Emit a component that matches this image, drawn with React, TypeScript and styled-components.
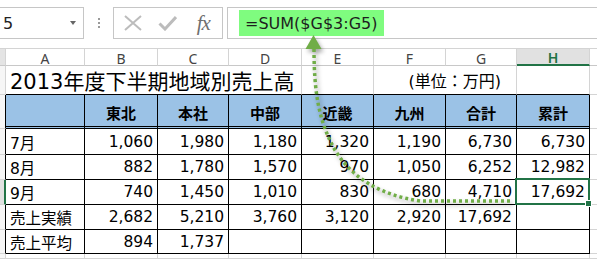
import React from 'react';
import styled, { createGlobalStyle, css } from 'styled-components';

const GRID = '#d4d4d4';
const LINE = '#000000';
const GREEN = '#217346';

const GlobalStyle = createGlobalStyle`
  body {
    margin: 0;
    background: #ffffff;
    font-family: "DejaVu Sans", "Noto Sans CJK JP", sans-serif;
  }
`;

const Page = styled.div`
  position: relative;
  width: 597px;
  height: 259px;
  overflow: hidden;
  background: #ffffff;
`;

const Toolbar = styled.div`
  display: flex;
  align-items: flex-start;
  height: 48px;
  padding-top: 7px;
  box-sizing: border-box;
`;

const NameBox = styled.div`
  box-sizing: border-box;
  display: flex;
  align-items: center;
  width: 85px;
  height: 32px;
  margin-left: -1px;
  padding-left: 3px;
  border: 1px solid #c6c6c6;
  font-size: 16px;
  color: #222;
`;

const DropArrow = styled.span`
  margin-left: auto;
  margin-right: 7px;
  width: 0;
  height: 0;
  border-left: 3px solid transparent;
  border-right: 3px solid transparent;
  border-top: 4px solid #666;
`;

const Grip = styled.div`
  width: 29px;
  height: 32px;
  display: flex;
  flex-direction: column;
  align-items: center;
  justify-content: center;
  gap: 2px;
`;

const GripDot = styled.span`
  width: 2px;
  height: 2px;
  background: #9a9a9a;
`;

const FnBox = styled.div`
  box-sizing: border-box;
  display: flex;
  align-items: center;
  width: 110px;
  height: 32px;
  padding: 0 1px;
  border: 1px solid #c6c6c6;
`;

const FnSlot = styled.div`
  width: 36px;
  display: flex;
  justify-content: center;
  align-items: center;
`;

const Fx = styled.span`
  font-family: "Liberation Serif", serif;
  font-style: italic;
  font-size: 21px;
  color: #6f6f6f;
  letter-spacing: -1px;
`;

const FormulaBox = styled.div`
  box-sizing: border-box;
  flex: 1;
  height: 32px;
  margin-left: 4px;
  padding: 2px 0 2px 11px;
  border: 1px solid #c6c6c6;
  border-right: none;
  display: flex;
  align-items: stretch;
`;

const FormulaMark = styled.span`
  display: flex;
  align-items: center;
  padding: 0 7px 0 6px;
  background: #7ffc7f;
  font-size: 16px;
  color: #1e1e1e;
`;

const Sheet = styled.div`
  display: grid;
  grid-template-columns: 6px 79px 73px 71px 73px 72px 72px 71px 73px 1fr;
  grid-template-rows: 17px 29px 34px 26px 25px 25px 25px 24px 1fr;
  height: 211px;
  box-sizing: border-box;
  border-top: 1px solid ${GRID};
`;

const ColHead = styled.div<{ $active?: boolean }>`
  box-sizing: border-box;
  display: flex;
  justify-content: center;
  align-items: center;
  padding-top: 2px;
  font-family: "Noto Sans", sans-serif;
  font-size: 14px;
  color: #444;
  background: ${p => (p.$active ? '#e1e1e1' : '#ffffff')};
  border-right: 1px solid ${GRID};
  border-bottom: ${p => (p.$active ? `2px solid ${GREEN}` : `1px solid #c8c8c8`)};
  ${p => p.$active && css`color: ${GREEN}; font-weight: 600;`}
`;

const Corner = styled.div`
  background: #e4e4e4;
  border-right: 1px solid ${GRID};
  border-bottom: 1px solid #c8c8c8;
`;

const RowHead = styled.div<{ $r?: string; $active?: boolean }>`
  box-sizing: border-box;
  background: ${p => (p.$active ? '#e1e1e1' : '#f6f6f6')};
  border-bottom: 1px solid ${GRID};
  border-right: ${p => (p.$active ? `2px solid ${GREEN}` : `1px solid ${p.$r || GRID}`)};
`;

type CellProps = {
  $r?: string;
  $b?: string;
  $double?: boolean;
  $align?: 'left' | 'right' | 'center';
  $bg?: string;
  $span?: number;
  $size?: number;
  $bold?: boolean;
  $pr?: number;
  $selected?: boolean;
};

const Cell = styled.div<CellProps>`
  box-sizing: border-box;
  display: flex;
  align-items: center;
  justify-content: ${p =>
    p.$align === 'right' ? 'flex-end' : p.$align === 'center' ? 'center' : 'flex-start'};
  grid-column: span ${p => p.$span || 1};
  padding: ${p => (p.$bold ? '4px' : '0')} ${p => p.$pr ?? 4}px 0 4px;
  min-width: 0;
  white-space: nowrap;
  font-size: ${p => p.$size || 15.5}px;
  font-weight: ${p => (p.$bold ? 700 : 400)};
  color: #000;
  background: ${p => p.$bg || '#ffffff'};
  border-right: 1px solid ${p => p.$r || GRID};
  border-bottom: ${p => (p.$double ? `3px double ${LINE}` : `1px solid ${p.$b || GRID}`)};
  ${p =>
    p.$selected &&
    css`
      position: relative;
      z-index: 2;
      &::after {
        content: '';
        position: absolute;
        top: -2px;
        left: -2px;
        right: -1px;
        bottom: -1px;
        border: 2px solid ${GREEN};
      }
      &::before {
        content: '';
        position: absolute;
        right: -3px;
        bottom: -3px;
        width: 5px;
        height: 5px;
        background: ${GREEN};
        border: 1px solid #ffffff;
        z-index: 1;
      }
    `}
`;

const ArrowLayer = styled.svg`
  position: absolute;
  left: 0;
  top: 0;
  pointer-events: none;
  z-index: 5;
  filter: drop-shadow(2px 3px 2px rgba(0, 0, 0, 0.35));
`;

const columns = ['A', 'B', 'C', 'D', 'E', 'F', 'G', 'H'];
const regions = ['東北', '本社', '中部', '近畿', '九州', '合計', '累計'];
const rows = [
  ['7月', '1,060', '1,980', '1,180', '1,320', '1,190', '6,730', '6,730'],
  ['8月', '882', '1,780', '1,570', '970', '1,050', '6,252', '12,982'],
  ['9月', '740', '1,450', '1,010', '830', '680', '4,710', '17,692'],
  ['売上実績', '2,682', '5,210', '3,760', '3,120', '2,920', '17,692', ''],
  ['売上平均', '894', '1,737', '', '', '', '', ''],
];

export default function App() {
  return (
    <Page>
      <GlobalStyle />
      <Toolbar>
        <NameBox>
          5
          <DropArrow />
        </NameBox>
        <Grip>
          <GripDot />
          <GripDot />
          <GripDot />
        </Grip>
        <FnBox>
          <FnSlot>
            <svg width="18" height="16" viewBox="0 0 18 16">
              <path d="M1 1 L17 15 M17 1 L1 15" stroke="#bcbcbc" strokeWidth="2" fill="none" />
            </svg>
          </FnSlot>
          <FnSlot>
            <svg width="19" height="16" viewBox="0 0 19 16">
              <path d="M1.5 8.5 L7 14 L18 2" stroke="#bcbcbc" strokeWidth="3" fill="none" />
            </svg>
          </FnSlot>
          <FnSlot>
            <Fx>fx</Fx>
          </FnSlot>
        </FnBox>
        <FormulaBox>
          <FormulaMark>=SUM($G$3:G5)</FormulaMark>
        </FormulaBox>
      </Toolbar>

      <Sheet>
        <Corner />
        {columns.map(c => (
          <ColHead key={c} $active={c === 'H'}>
            {c}
          </ColHead>
        ))}
        <ColHead />

        <RowHead />
        <Cell $span={4} $b={LINE} $size={21}>
          2013年度下半期地域別売上高
        </Cell>
        <Cell $b={LINE} />
        <Cell $span={2} $b={LINE} $align="right" $pr={15} $size={16}>
          (単位：万円)
        </Cell>
        <Cell $b={LINE} />
        <Cell />

        <RowHead $r={LINE} />
        <Cell $double $r={LINE} $bg="#9bc2e6" />
        {regions.map(r => (
          <Cell key={r} $double $r={LINE} $bg="#9bc2e6" $align="center" $bold $size={15}>
            {r}
          </Cell>
        ))}
        <Cell />

        {rows.map((row, i) => (
          <React.Fragment key={row[0]}>
            <RowHead $r={LINE} $active={i === 2} />
            {row.map((v, j) => (
              <Cell
                key={j}
                $r={LINE}
                $b={LINE}
                $align={j === 0 ? 'left' : 'right'}
                $selected={i === 2 && j === 7}
              >
                {v}
              </Cell>
            ))}
            <Cell />
          </React.Fragment>
        ))}

        <RowHead />
        {columns.map(c => (
          <Cell key={c} />
        ))}
        <Cell />
      </Sheet>

      <ArrowLayer width="597" height="259" viewBox="0 0 597 259">
        <path
          d="M510 201 L420 201 C380 195 352 178 335 150 C318 120 314 90 314 48"
          fill="none"
          stroke="#70ad47"
          strokeWidth="3.5"
          strokeDasharray="3 3"
        />
        <polygon points="313.5,35 305.5,49 321.5,49" fill="#70ad47" />
      </ArrowLayer>
    </Page>
  );
}
